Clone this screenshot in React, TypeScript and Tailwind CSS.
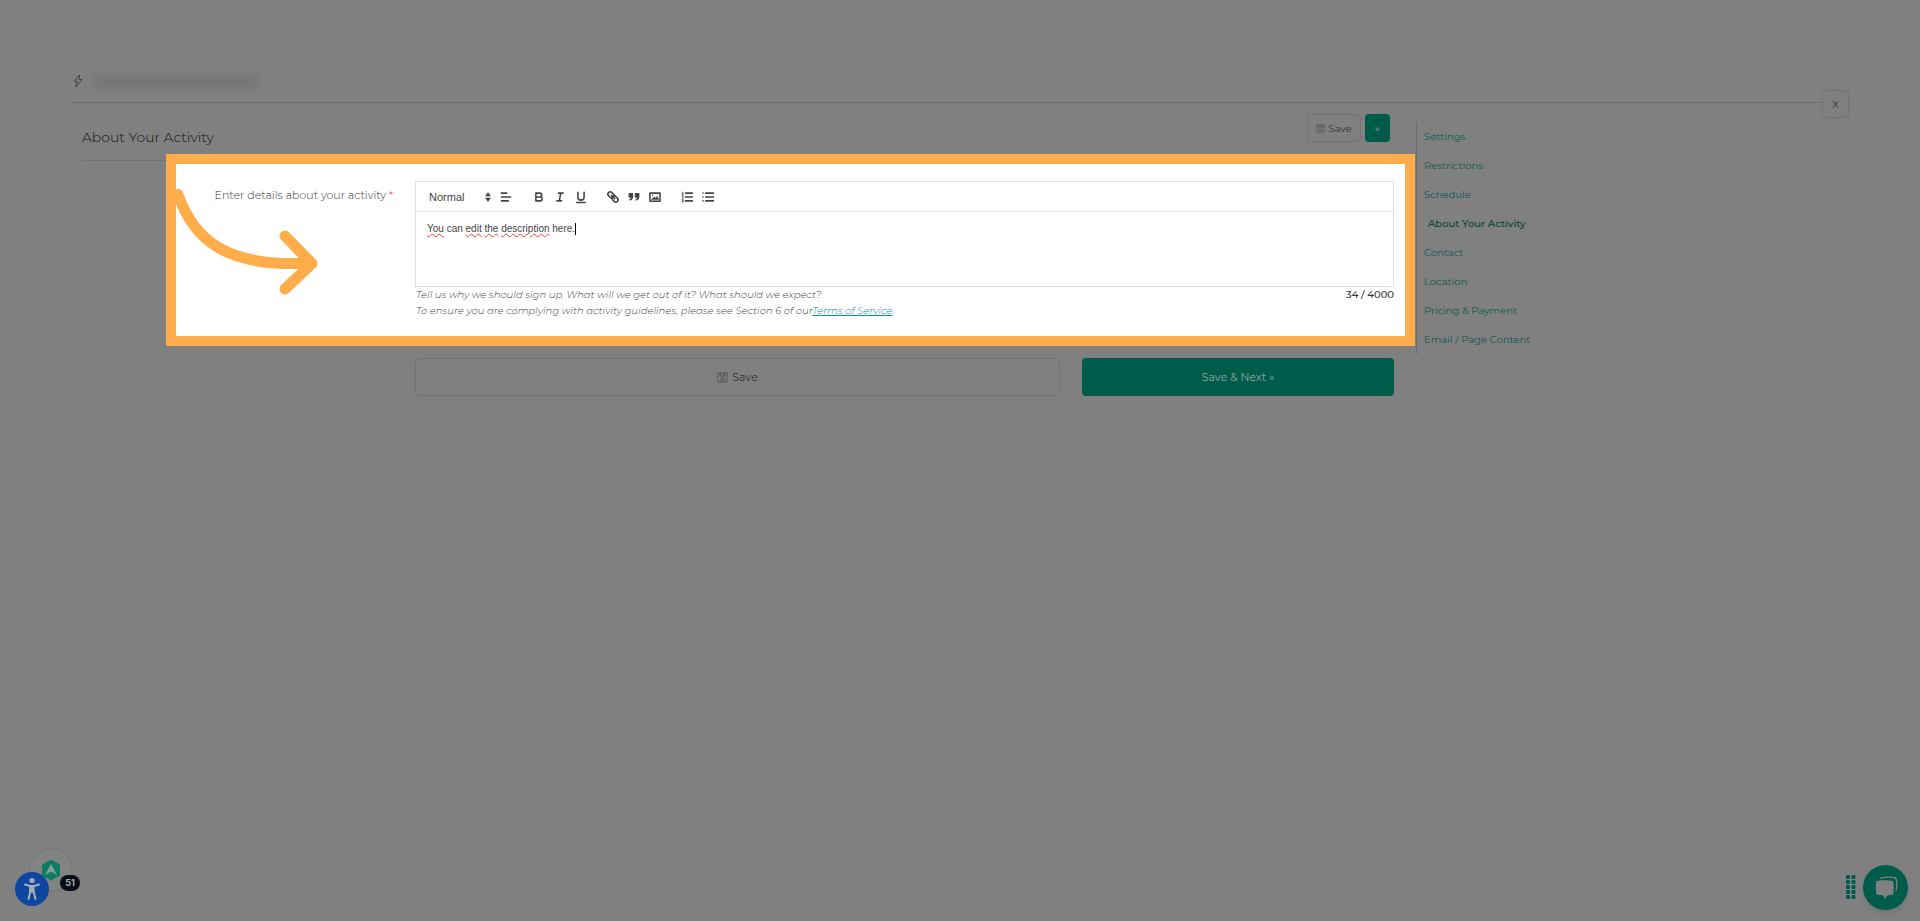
import React from "react";

const navItems = [
  "Settings",
  "Restrictions",
  "Schedule",
  "About Your Activity",
  "Contact",
  "Location",
  "Pricing & Payment",
  "Email / Page Content",
];

function SaveIcon({ className }: { className: string }) {
  return (
    <svg className={className} viewBox="0 0 12 12" fill="none" stroke="currentColor" strokeWidth="0.6" aria-hidden="true">
      <path d="M1 1h10v10H1.8L1 10.2z" />
      <path d="M3.5 1v3.4h5V1M7 2v1.4M3.5 7h5M3.5 9h5" />
    </svg>
  );
}

function ToolButton({ label, className = "", children }: { label: string; className?: string; children: React.ReactNode }) {
  return (
    <button type="button" aria-label={label} className={`flex h-4 w-[21px] items-center justify-center ${className}`}>
      <svg className="size-[14px]" viewBox="0 0 18 18" fill="none" stroke="#444" strokeWidth="2" strokeLinecap="round" strokeLinejoin="round">
        {children}
      </svg>
    </button>
  );
}

function Toolbar() {
  return (
    <div className="flex h-[30px] items-center border-b border-[#e0e0e0] pl-[11px]">
      <div className="relative flex items-center">
        <select aria-label="Text style" className="w-[65px] appearance-none bg-transparent pl-[2px] font-['Liberation_Sans',sans-serif] text-[11px] leading-4 text-[#444]">
          <option>Normal</option>
        </select>
        <svg className="pointer-events-none absolute right-0 h-[10px] w-[8px]" viewBox="0 0 8 10" fill="#444" aria-hidden="true">
          <path d="M4 .6 6.4 4H1.6zM4 9.4 1.6 6h4.8z" stroke="#444" strokeWidth=".6" strokeLinejoin="round" />
        </svg>
      </div>
      <ToolButton label="Align" className="ml-[3px]">
        <path d="M3 4h7M3 9h12M3 14h9" />
      </ToolButton>
      <ToolButton label="Bold" className="ml-3">
        <path d="M5 4h5a2.5 2.5 0 0 1 0 5H5zM5 9h5.5a2.5 2.5 0 0 1 0 5H5z" />
      </ToolButton>
      <ToolButton label="Italic">
        <path d="M7 4h6M5 14h6M10 4l-2 10" />
      </ToolButton>
      <ToolButton label="Underline">
        <path d="M5 3v6a4 4 0 0 0 8 0V3M3.5 16h11" />
      </ToolButton>
      <ToolButton label="Link" className="ml-[11px]">
        <g transform="rotate(45 9 9)">
          <rect x="1" y="6" width="8.500" height="6" rx="3" />
          <rect x="8.500" y="6" width="8.500" height="6" rx="3" />
          <path d="M6 9h6" />
        </g>
      </ToolButton>
      <ToolButton label="Quote">
        <path d="M3 5h4v4H3zM7 8c0 3-1 4-3 4.500M11 5h4v4h-4zM15 8c0 3-1 4-3 4.500" fill="#444" />
      </ToolButton>
      <ToolButton label="Image">
        <path d="M2.500 4h13v10.500h-13z" />
        <path d="M5 12l3-3 2 1.500 2-2 1.500 3.500z" fill="#444" strokeWidth="1" />
        <circle cx="6" cy="7" r=".8" fill="#444" stroke="none" />
      </ToolButton>
      <ToolButton label="Numbered list" className="ml-[11px]">
        <path d="M7 4h9M7 9h9M7 14h9" />
        <path d="M2.500 5.500h2M3.500 5.500v-3l-.8.4M2.500 7.500h1.500v1.500l-1.500 1.500h2M2.500 12.500h1.500v3H2.500M4 14H3" strokeWidth="1" />
      </ToolButton>
      <ToolButton label="Bullet list">
        <path d="M6 4h10M6 9h10M6 14h10M2.500 4h.1M2.500 9h.1M2.500 14h.1" />
      </ToolButton>
    </div>
  );
}

function Typo({ children }: { children: string }) {
  return <span className="underline decoration-[#ff3b3b] decoration-wavy decoration-1 underline-offset-1">{children}</span>;
}

export default function App() {
  return (
    <div className="relative min-h-screen bg-[#808080] px-[71px] pt-[70px] font-['Montserrat','Inter',sans-serif] text-[10px] text-[#333]">
      {/* Top bar */}
      <header className="relative flex h-[33px] items-start gap-[10px] border-b border-[#6b6b6b]">
        <svg className="mt-1 ml-[2px] h-[14px] w-[10px]" viewBox="0 0 10 14" fill="none" stroke="#333" strokeWidth=".8" strokeLinejoin="round" aria-hidden="true">
          <path d="M6.500 1 1.500 7.500h2.600L3 13l6-7.500H6z" />
        </svg>
        <div className="mt-[5px] h-[14px] w-[166px] bg-[#767676] blur-[3px]" />
        <button type="button" className="absolute top-5 right-0 h-7 w-[27px] rounded border border-[#737373] bg-[#808080]">
          X
        </button>
      </header>

      <div className="flex">
        <main className="min-w-0 flex-1">
          <div className="ml-[11px] flex h-[58px] items-start justify-between border-b border-[#737373] pt-[11px] pr-[26px]">
            <h1 className="mt-[13px] text-[14px] leading-5 font-light text-[#111]">About Your Activity</h1>
            <div className="flex gap-1">
              <button type="button" className="flex h-7 w-[54px] items-center justify-center gap-[3px] rounded border border-[#737373]">
                <SaveIcon className="size-[9px]" />
                Save
              </button>
              <button type="button" aria-label="Next" className="h-7 w-[25px] rounded bg-[#005c4a] text-[#90a8a2]">
                »
              </button>
            </div>
          </div>

          {/* Highlighted form row */}
          <section className="relative z-10 -mt-[7px] mr-px ml-[95px] flex h-[192px] border-10 border-[#ffad4a] bg-white pt-[17px] pr-[11px]">
            <label id="details-label" className="w-[239px] shrink-0 pt-[6px] pr-[22px] text-right text-[11px] leading-4 font-light text-[#333]">
              Enter details about your activity <span className="text-[#ff3030]">*</span>
            </label>
            <div className="min-w-0 flex-1">
              <div className="border border-[#e0e0e0]">
                <Toolbar />
                <div
                  role="textbox"
                  aria-multiline="true"
                  aria-labelledby="details-label"
                  contentEditable
                  suppressContentEditableWarning
                  spellCheck={false}
                  className="h-[74px] px-[11px] pt-[9px] font-['Liberation_Sans',sans-serif] text-[10px] leading-4 text-[#444] outline-none"
                >
                  <Typo>You</Typo> can <Typo>edit</Typo> <Typo>the</Typo> <Typo>description</Typo> here.
                  <span className="inline-block h-3 w-px bg-black align-middle" />
                </div>
              </div>
              <div className="flex justify-between leading-4">
                <p className="pl-px font-light text-[#444] italic">
                  Tell us why we should sign up. What will we get out of it? What should we expect?
                  <br />
                  To ensure you are complying with activity guidelines, please see Section 6 of our
                  <a href="#terms" className="text-[#009a84] underline">Terms of Service</a>.
                </p>
                <span className="font-medium text-[#333]">34 / 4000</span>
              </div>
            </div>

            <svg className="pointer-events-none absolute top-[20px] -left-[10px] h-[120px] w-[160px]" viewBox="0 0 160 120" fill="none" stroke="#ffad4a" strokeWidth="11" strokeLinecap="round" strokeLinejoin="round" aria-hidden="true">
              <path d="M12 10.500C28 57 62 84 144 79" />
              <path d="M119 52l27 27.500-27 25.500" />
            </svg>
          </section>

          <div className="mt-3 mr-[22px] ml-[344px] flex gap-[22px] text-[11px]">
            <button type="button" className="flex h-[38px] flex-1 items-center justify-center gap-1 rounded border border-[#737373]">
              <SaveIcon className="size-[11px]" />
              Save
            </button>
            <button type="button" className="h-[38px] w-[312px] rounded bg-[#005c4a] text-[#90a8a2]">
              Save &amp; Next »
            </button>
          </div>
        </main>

        {/* Section links */}
        <nav className="mt-[19px] w-[433px] self-start border-l border-[#6b6b6b] pl-[7px]">
          <ul className="flex flex-col">
            {navItems.map((item) => (
              <li key={item} className="flex h-[29px] items-center">
                <a
                  href={"#" + item}
                  className={item === "About Your Activity" ? "pl-1 font-medium text-[#00453a]" : "text-[#0a5a4e]"}
                >
                  {item}
                </a>
              </li>
            ))}
          </ul>
        </nav>
      </div>

      {/* Left widgets */}
      <div className="absolute bottom-3 left-[13px] h-[62px] w-[70px]">
        <svg className="size-full" viewBox="0 0 70 62" aria-hidden="true">
          <circle cx="38" cy="23" r="22" fill="#797979" />
          <circle cx="38" cy="23" r="20.500" fill="#828484" />
          <path d="M38 12.500 47 17.500v11L38 33.500 29 28.500v-11z" fill="#0a7d62" />
          <path d="M38 17l6 11-6-3.500-6 3.500z" fill="#8a9d98" />
          <circle cx="19" cy="42" r="17" fill="#0d47a1" />
          <g stroke="#a8afb8" fill="#a8afb8" strokeLinecap="round" strokeLinejoin="round">
            <circle cx="19" cy="33.500" r="2.600" stroke="none" />
            <path d="M12 37.500l5 1.500h4l5-1.500" strokeWidth="2" fill="none" />
            <path d="M17 39h4v6h-4z" strokeWidth="1" />
            <path d="M17.500 44l-2 8M20.500 44l2 8" strokeWidth="2" fill="none" />
          </g>
        </svg>
        <span className="absolute top-[28px] right-[3px] flex h-4 w-5 items-center justify-center rounded-full bg-[#080d18] font-['Inter',sans-serif] text-[9px] font-bold text-[#aaa]">51</span>
      </div>

      {/* Chat launcher */}
      <div className="absolute right-3 bottom-[11px] flex items-center gap-[7px]">
        <svg className="h-[26px] w-[10px]" viewBox="0 0 10 26" fill="#005c4a" aria-hidden="true">
          {[0, 5, 10, 15, 20].map((y) => (
            <g key={y}>
              <rect x="0" y={y} width="4" height="4" rx="1" />
              <rect x="5.500" y={y} width="4" height="4" rx="1" />
            </g>
          ))}
        </svg>
        <button type="button" aria-label="Open chat" className="flex size-[45px] items-center justify-center rounded-full bg-[#005c4a] shadow-md">
          <svg className="size-6" viewBox="0 0 24 24" fill="none" aria-hidden="true">
            <path d="M6 2.500C9 .8 19 .8 21.500 1.800 23.500 5 23 12 22 14.500" stroke="#808080" strokeWidth="1.400" />
            <path d="M2.500 5c4-1 12-1 16.500 0 1 4 1 9.500 0 13.500-2 .5-4 .7-5.500.8L11 23l-2-3.700c-2-.1-4.500-.3-6.500-.8-1-4-1-9.500 0-13.500z" fill="#808080" />
          </svg>
        </button>
      </div>
    </div>
  );
}
